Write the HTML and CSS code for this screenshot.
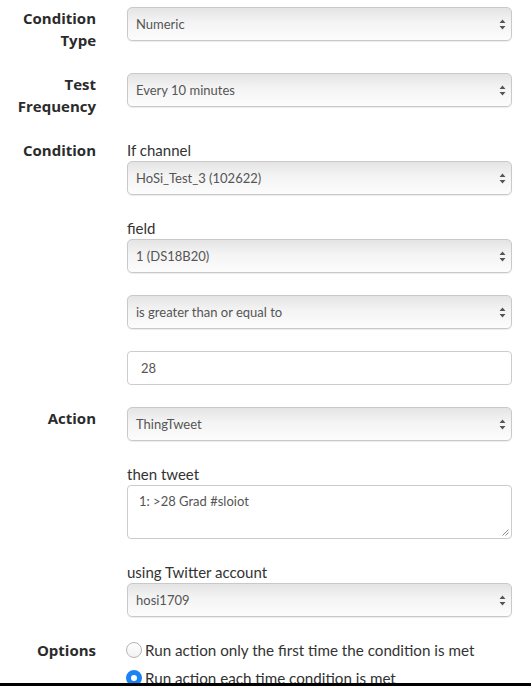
FILE: index.html
```html
<!DOCTYPE html>
<html lang="en">
<head>
<meta charset="utf-8">
<title>React</title>
<link rel="stylesheet" href="styles.css">
</head>
<body>
<form class="form">
  <div class="row">
    <div class="label">Condition<br>Type</div>
    <div class="control">
      <div class="select"><span>Numeric</span><svg class="arrows" width="7" height="11" viewBox="0 0 7 11"><path d="M3.5 0.5L6.5 4H0.5Z M3.5 10.5L6.5 7H0.5Z"/></svg></div>
    </div>
  </div>
  <div class="row">
    <div class="label">Test<br>Frequency</div>
    <div class="control">
      <div class="select"><span>Every 10 minutes</span><svg class="arrows" width="7" height="11" viewBox="0 0 7 11"><path d="M3.5 0.5L6.5 4H0.5Z M3.5 10.5L6.5 7H0.5Z"/></svg></div>
    </div>
  </div>
  <div class="row">
    <div class="label">Condition</div>
    <div class="control stack">
      <div class="field">
        <div class="sublabel">If channel</div>
        <div class="select"><span>HoSi_Test_3 (102622)</span><svg class="arrows" width="7" height="11" viewBox="0 0 7 11"><path d="M3.5 0.5L6.5 4H0.5Z M3.5 10.5L6.5 7H0.5Z"/></svg></div>
      </div>
      <div class="field">
        <div class="sublabel">field</div>
        <div class="select"><span>1 (DS18B20)</span><svg class="arrows" width="7" height="11" viewBox="0 0 7 11"><path d="M3.5 0.5L6.5 4H0.5Z M3.5 10.5L6.5 7H0.5Z"/></svg></div>
      </div>
      <div class="select"><span>is greater than or equal to</span><svg class="arrows" width="7" height="11" viewBox="0 0 7 11"><path d="M3.5 0.5L6.5 4H0.5Z M3.5 10.5L6.5 7H0.5Z"/></svg></div>
      <div class="input">28</div>
    </div>
  </div>
  <div class="row">
    <div class="label">Action</div>
    <div class="control stack">
      <div class="select"><span>ThingTweet</span><svg class="arrows" width="7" height="11" viewBox="0 0 7 11"><path d="M3.5 0.5L6.5 4H0.5Z M3.5 10.5L6.5 7H0.5Z"/></svg></div>
      <div class="field">
        <div class="sublabel">then tweet</div>
        <div class="textarea"><span>1: &gt;28 Grad #sloiot</span><svg class="grip" width="7" height="7" viewBox="0 0 7 7"><path d="M6.5 0.5L0.5 6.5M6.5 3.5L3.5 6.5" stroke="#888" stroke-width="1" fill="none"/></svg></div>
      </div>
      <div class="field">
        <div class="sublabel">using Twitter account</div>
        <div class="select"><span>hosi1709</span><svg class="arrows" width="7" height="11" viewBox="0 0 7 11"><path d="M3.5 0.5L6.5 4H0.5Z M3.5 10.5L6.5 7H0.5Z"/></svg></div>
      </div>
    </div>
  </div>
  <div class="row">
    <div class="label">Options</div>
    <div class="control">
      <div class="radio"><span class="dot"></span><span>Run action only the first time the condition is met</span></div>
      <div class="radio"><span class="dot checked"></span><span>Run action each time condition is met</span></div>
    </div>
  </div>
</form>
<div class="bottom-bar"></div>
</body>
</html>
```
FILE: styles.css
```css
html, body {
  margin: 0;
  padding: 0;
  background: #fff;
  overflow: hidden;
  height: 686px;
}
body {
  font-family: Lato, "Liberation Sans", sans-serif;
  color: #333;
  font-size: 15px;
  line-height: 22px;
}
.form {
  padding-top: 7px;
}
.row {
  display: grid;
  grid-template-columns: 96px 385px;
  column-gap: 31px;
  margin-bottom: 22px;
}
.label {
  font-family: "Open Sans", Lato, sans-serif;
  font-weight: 700;
  text-align: right;
  font-size: 15px;
  line-height: 22px;
  color: #2b2b2b;
}
.control {
  display: flex;
  flex-direction: column;
}
.stack {
  gap: 22px;
}
.field {
  display: flex;
  flex-direction: column;
}
.sublabel {
  font-size: 15px;
  line-height: 22px;
  color: #333;
}
.select {
  box-sizing: border-box;
  height: 34px;
  border: 1px solid #c9c9c9;
  border-radius: 5px;
  background: linear-gradient(#e4e4e4, #f4f4f4 45%, #fcfcfc);
  box-shadow: 0 1px 1px rgba(0,0,0,0.08);
  display: flex;
  align-items: center;
  justify-content: space-between;
  padding: 0 5px 0 8px;
  font-size: 13px;
  color: #555;
}
.arrows {
  fill: #555;
}
.input {
  box-sizing: border-box;
  height: 34px;
  border: 1px solid #ccc;
  border-radius: 4px;
  background: #fff;
  display: flex;
  align-items: center;
  padding: 0 13px;
  font-size: 13px;
  color: #555;
}
.textarea {
  box-sizing: border-box;
  height: 54px;
  border: 1px solid #ccc;
  border-radius: 4px;
  background: #fff;
  display: flex;
  flex-direction: column;
  justify-content: space-between;
  padding: 6px 2px 2px 11px;
  font-size: 13px;
  line-height: 18px;
  color: #555;
}
.grip {
  align-self: flex-end;
}
.radio {
  display: flex;
  align-items: center;
  gap: 3px;
  height: 28px;
  margin-top: -3px;
  margin-left: -1px;
  font-size: 15.2px;
  color: #333;
}
.radio + .radio {
  margin-top: 0;
}
.dot {
  box-sizing: border-box;
  width: 16px;
  height: 16px;
  border-radius: 50%;
  border: 1px solid #b5b5b5;
  background: linear-gradient(#fff, #f2f2f2);
  flex: none;
}
.dot.checked {
  border: 5px solid #1b84f5;
  background: #fff;
}
.bottom-bar {
  position: fixed;
  left: 0;
  right: 0;
  bottom: 0;
  height: 3px;
  background: #000;
}
```
